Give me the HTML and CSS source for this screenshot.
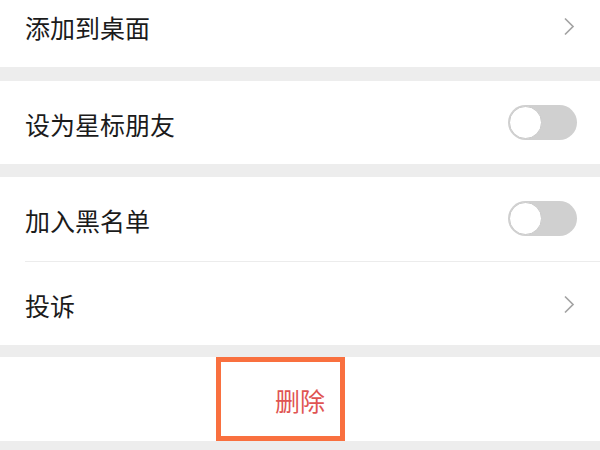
FILE: index.html
```html
<!DOCTYPE html>
<html lang="zh-CN">
<head>
<meta charset="utf-8">
<link rel="stylesheet" href="styles.css">
</head>
<body>
<div class="page">
  <div class="group g1">
    <div class="row r83">
      <span class="label">添加到桌面</span>
      <svg class="chev" width="12" height="19" viewBox="0 0 12 19"><polyline points="2,1.5 10,9.5 2,17.5" fill="none" stroke="#a3a3a3" stroke-width="1.7"/></svg>
    </div>
  </div>
  <div class="group g2">
    <div class="row r83">
      <span class="label">设为星标朋友</span>
      <span class="toggle"><span class="knob"></span></span>
    </div>
  </div>
  <div class="group g3">
    <div class="row r84 divided">
      <span class="label">加入黑名单</span>
      <span class="toggle"><span class="knob"></span></span>
    </div>
    <div class="row r83">
      <span class="label">投诉</span>
      <svg class="chev" width="12" height="19" viewBox="0 0 12 19"><polyline points="2,1.5 10,9.5 2,17.5" fill="none" stroke="#a3a3a3" stroke-width="1.7"/></svg>
    </div>
  </div>
  <div class="group g4">
    <div class="row r84 center">
      <span class="danger">删除</span>
      <span class="highlight"></span>
    </div>
  </div>
</div>
</body>
</html>
```

FILE: styles.css
```css
html, body {
  margin: 0;
  padding: 0;
  background: #ededed;
  width: 600px;
  height: 450px;
  overflow: hidden;
}
.page {
  margin-top: -16px;
  font-family: "Noto Sans CJK SC", "Noto Sans", sans-serif;
}
.group {
  background: #ffffff;
}
.g1 { margin-bottom: 14px; }
.g2 { margin-bottom: 13px; }
.g3 { margin-bottom: 12px; }
.row {
  position: relative;
  display: flex;
  align-items: center;
  justify-content: space-between;
  padding: 2px 23px 0 25px;
  box-sizing: border-box;
}
.r83 { height: 83px; }
.r84 { height: 84px; }
.divided::after {
  content: "";
  position: absolute;
  left: 25px;
  right: 0;
  bottom: -1px;
  height: 1px;
  background: #ececec;
}
.divided { margin-bottom: 1px; }
.label {
  font-size: 25px;
  line-height: 30px;
  color: #1b1b1b;
  letter-spacing: 0;
}
.chev {
  display: block;
  margin-right: 2px;
}
.toggle {
  position: relative;
  display: block;
  width: 69px;
  height: 35px;
  border-radius: 18px;
  background: #d0d0d0;
  margin-top: -3px;
}
.knob {
  position: absolute;
  left: 1px;
  top: 1px;
  width: 33px;
  height: 33px;
  border-radius: 50%;
  background: #ffffff;
  box-sizing: border-box;
  border: 1px solid #cacaca;
}
.center {
  justify-content: center;
  padding: 2px 0 0 0;
}
.danger {
  font-size: 25px;
  line-height: 30px;
  color: #e05452;
}
.highlight {
  position: absolute;
  left: 216px;
  top: 0;
  width: 129px;
  height: 84px;
  box-sizing: border-box;
  border: 5px solid #f9703f;
}
```
